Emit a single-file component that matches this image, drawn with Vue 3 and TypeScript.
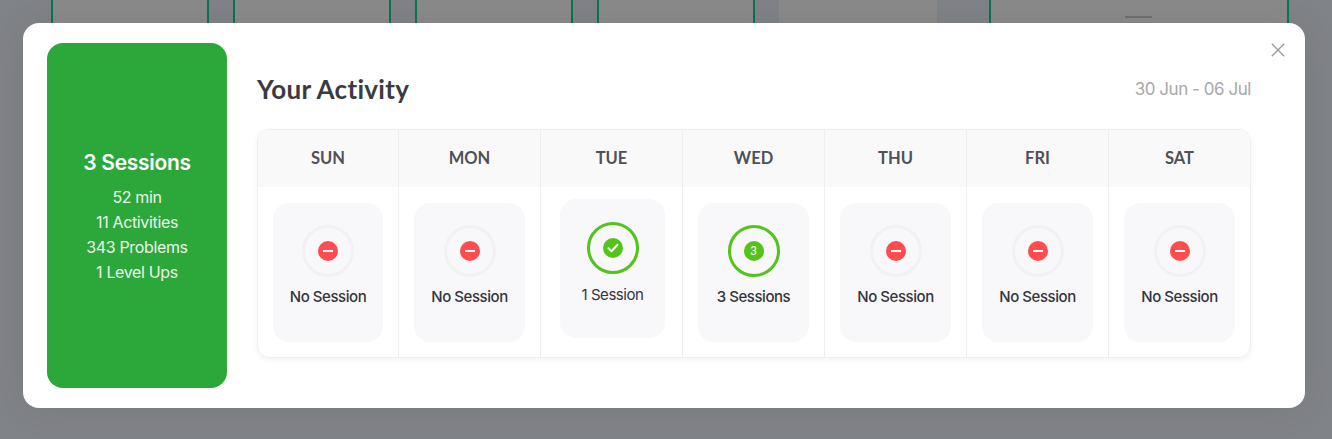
<script setup lang="ts">
interface Day {
  name: string
  label: string
  kind: 'none' | 'done' | 'count'
  count?: number
  lifted?: boolean
}

const days: Day[] = [
  { name: 'SUN', label: 'No Session', kind: 'none' },
  { name: 'MON', label: 'No Session', kind: 'none' },
  { name: 'TUE', label: '1 Session', kind: 'done', lifted: true },
  { name: 'WED', label: '3 Sessions', kind: 'count', count: 3 },
  { name: 'THU', label: 'No Session', kind: 'none' },
  { name: 'FRI', label: 'No Session', kind: 'none' },
  { name: 'SAT', label: 'No Session', kind: 'none' },
]

const stats = ['52 min', '11 Activities', '343 Problems', '1 Level Ups']
</script>

<template>
  <div class="page">
    <div class="behind">
      <div class="bg-card lined"></div>
      <div class="bg-card lined"></div>
      <div class="bg-card lined"></div>
      <div class="bg-card lined"></div>
      <div class="bg-card plain"></div>
      <div class="bg-card wide"><span class="dash"></span></div>
    </div>

    <div class="modal">
      <button class="close" aria-label="Close">
        <svg width="14" height="14" viewBox="0 0 14 14" fill="none" stroke="#9a9a9a" stroke-width="1.3">
          <path d="M.8.8l12.4 12.4M13.2.8L.8 13.2" />
        </svg>
      </button>

      <aside class="summary">
        <div class="summary-title">3 Sessions</div>
        <div v-for="s in stats" :key="s" class="summary-line">{{ s }}</div>
      </aside>

      <section class="content">
        <header class="head">
          <h2 class="title">Your Activity</h2>
          <span class="range">30 Jun - 06 Jul</span>
        </header>

        <div class="week">
          <div v-for="d in days" :key="d.name" class="col">
            <div class="col-name">{{ d.name }}</div>
            <div class="col-body">
              <div class="cell" :class="{ lifted: d.lifted }">
                <div class="ring" :class="{ green: d.kind !== 'none' }">
                  <span v-if="d.kind === 'none'" class="dot red"><i class="minus"></i></span>
                  <span v-else-if="d.kind === 'done'" class="dot lime">
                    <svg width="12" height="10" viewBox="0 0 12 10" fill="none" stroke="#fff" stroke-width="2" stroke-linecap="round" stroke-linejoin="round">
                      <path d="M1.5 5.2l3 3 6-6.4" />
                    </svg>
                  </span>
                  <span v-else class="dot lime num">{{ d.count }}</span>
                </div>
                <div class="cell-label">{{ d.label }}</div>
              </div>
            </div>
          </div>
        </div>
      </section>
    </div>
  </div>
</template>

<style>
html, body {
  margin: 0;
  background: #808388;
}
</style>

<style scoped>
.page {
  position: relative;
  width: 1332px;
  height: 439px;
  padding: 23px 27px 31px 23px;
  box-sizing: border-box;
  overflow: hidden;
  background: #808388;
  font-family: Inter, "Noto Sans", sans-serif;
}
.behind {
  position: absolute;
  top: 0;
  left: 51px;
  display: flex;
  height: 23px;
}
.bg-card {
  height: 23px;
  box-sizing: border-box;
  background: #8a8a8a;
}
.lined {
  width: 158px;
  margin-right: 24px;
  border-left: 2px solid #0b7550;
  border-right: 2px solid #0b7550;
}
.plain {
  width: 158px;
  margin-right: 52px;
}
.wide {
  position: relative;
  width: 300px;
  border-left: 2px solid #0b7550;
  border-right: 2px solid #0b7550;
}
.dash {
  position: absolute;
  left: 134px;
  top: 16px;
  width: 27px;
  height: 2px;
  background: #707070;
}
.modal {
  position: relative;
  display: flex;
  height: 385px;
  padding: 20px 54px 20px 24px;
  box-sizing: border-box;
  background: #fff;
  border-radius: 16px;
  box-shadow: 0 0 40px rgba(0, 0, 0, 0.08);
}
.close {
  position: absolute;
  top: 20px;
  right: 20px;
  padding: 0;
  border: 0;
  background: none;
  line-height: 0;
}
.summary {
  width: 180px;
  flex-shrink: 0;
  display: flex;
  flex-direction: column;
  align-items: center;
  justify-content: center;
  background: #2ca73a;
  border-radius: 16px;
  color: #fff;
  padding-top: 3px;
  box-sizing: border-box;
}
.summary-title {
  font-size: 21px;
  line-height: 28px;
  font-weight: 600;
  letter-spacing: -0.3px;
  margin-bottom: 8px;
}
.summary-line {
  font-size: 16px;
  line-height: 25px;
  letter-spacing: -0.35px;
  color: #e9f6ea;
}
.content {
  flex: 1;
  min-width: 0;
  margin-left: 30px;
}
.head {
  display: flex;
  justify-content: space-between;
  align-items: center;
  height: 86px;
  padding-top: 6px;
  box-sizing: border-box;
}
.title {
  margin: 0;
  font-family: Lato, sans-serif;
  font-size: 26px;
  line-height: 34px;
  font-weight: 700;
  letter-spacing: 0.3px;
  color: #3a3b3f;
}
.range {
  font-size: 17px;
  letter-spacing: -0.45px;
  color: #a8a8a8;
}
.week {
  display: grid;
  grid-template-columns: 140px repeat(6, 142px);
  border: 1px solid #eeeeee;
  border-radius: 12px;
  overflow: hidden;
  box-shadow: 0 2px 6px rgba(0, 0, 0, 0.05);
  height: 229px;
  box-sizing: border-box;
}
.col + .col {
  border-left: 1px solid #eeeeee;
}
.col-name {
  height: 57px;
  padding-bottom: 2px;
  box-sizing: border-box;
  display: flex;
  align-items: center;
  justify-content: center;
  background: #f9f9f9;
  font-family: Lato, sans-serif;
  font-size: 16.5px;
  font-weight: 700;
  color: #505156;
}
.col-body {
  display: flex;
  justify-content: center;
  padding-top: 16px;
}
.cell {
  width: 111px;
  height: 139px;
  box-sizing: border-box;
  display: flex;
  flex-direction: column;
  align-items: center;
  padding-top: 22px;
  background: #f8f8fb;
  border-radius: 16px;
}
.col:first-child .cell {
  width: 110px;
}
.lifted {
  width: 105px;
  margin-top: -4px;
  margin-left: 2px;
  padding-top: 23px;
}
.ring {
  width: 52px;
  height: 52px;
  box-sizing: border-box;
  display: flex;
  align-items: center;
  justify-content: center;
  border: 3px solid #f1f1f1;
  border-radius: 50%;
}
.ring.green {
  border-color: #52c41a;
}
.dot {
  width: 20px;
  height: 20px;
  display: flex;
  align-items: center;
  justify-content: center;
  border-radius: 50%;
}
.red {
  background: #ff4d4f;
}
.lime {
  background: #52c41a;
}
.minus {
  width: 10px;
  height: 2px;
  background: #fff;
}
.num {
  font-family: Roboto, sans-serif;
  font-size: 12px;
  color: #fff;
}
.cell-label {
  margin-top: 9px;
  font-size: 15px;
  line-height: 22px;
  font-weight: 500;
  letter-spacing: -0.45px;
  color: #34353a;
}
.lifted .cell-label {
  margin-top: 10px;
  font-weight: 400;
}
</style>
